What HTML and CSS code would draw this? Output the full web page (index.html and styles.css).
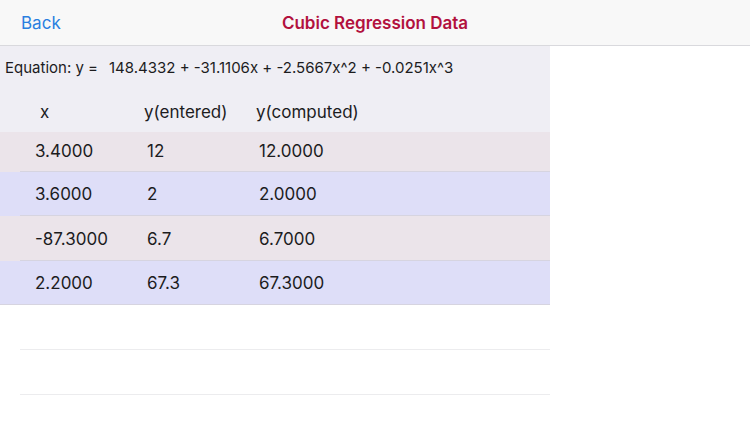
FILE: index.html
```html
<!DOCTYPE html>
<html>
<head>
<meta charset="utf-8">
<link rel="stylesheet" href="styles.css">
</head>
<body>
<div class="nav">
  <span class="back">Back</span>
  <span class="title">Cubic Regression Data</span>
</div>
<div class="panel">
  <div class="head">
    <div class="eq"><span>Equation: y =</span><span class="eqv">148.4332 + -31.1106x + -2.5667x^2 + -0.0251x^3</span></div>
    <div class="cols"><span class="c1 hx">x</span><span class="c2">y(entered)</span><span class="c3">y(computed)</span></div>
  </div>
  <div class="row odd r1"><span class="c1">3.4000</span><span class="c2">12</span><span class="c3">12.0000</span></div>
  <div class="row even"><span class="c1">3.6000</span><span class="c2">2</span><span class="c3">2.0000</span></div>
  <div class="row odd r3"><span class="c1">-87.3000</span><span class="c2">6.7</span><span class="c3">6.7000</span></div>
  <div class="row even last"><span class="c1">2.2000</span><span class="c2">67.3</span><span class="c3">67.3000</span></div>
  <div class="empty"></div>
  <div class="empty"></div>
</div>
</body>
</html>
```
FILE: styles.css
```css
html, body { margin: 0; padding: 0; background: #ffffff; }
body { width: 750px; height: 422px; overflow: hidden; font-family: Inter, "Liberation Sans", sans-serif; color: #1c1c1e; }
.nav { height: 45px; background: #f8f8f8; border-bottom: 1px solid #d9d9dd; display: flex; align-items: center; position: relative; }
.back { margin-left: 21px; font-size: 17px; color: #2a7fe0; }
.title { position: absolute; left: 0; right: 0; text-align: center; font-size: 17px; font-weight: 600; color: #b2113e; pointer-events: none; }
.panel { width: 550px; }
.head { background: #efeef4; height: 86px; }
.eq { padding: 13px 0 0 5px; font-size: 15px; display: flex; gap: 11px; height: 24px; line-height: 18px; }
.cols { display: flex; font-size: 17px; margin-top: 19px; line-height: 20px; }
.c1 { width: 109px; padding-left: 35px; }
.hx { padding-left: 40px; width: 104px; }
.c2 { width: 112px; }
.row { height: 44px; display: flex; align-items: center; font-size: 17px; position: relative; }
.row::after { content: ""; position: absolute; left: 20px; right: 0; bottom: 0; height: 1px; background: #d6d4e0; }
.row.last::after { left: 0; }
.odd { background: #ebe4ea; }
.even { background: #dedef8; }
.r1 { height: 40px; padding-bottom: 2px; box-sizing: border-box; }
.r3 { height: 45px; }
.row .c1 { padding-left: 35px; }
.row .c2 { padding-left: 3px; width: 109px; }
.row .c3 { padding-left: 3px; }
.empty { height: 45px; margin-left: 20px; border-bottom: 1px solid #ececee; box-sizing: border-box; }
```
